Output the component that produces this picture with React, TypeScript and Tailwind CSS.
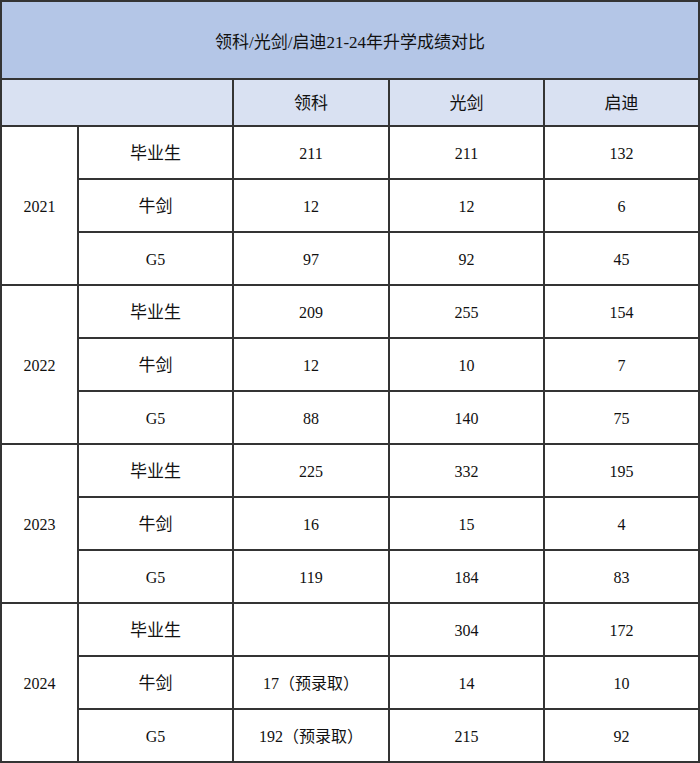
const groups = [
  {
    year: "2021",
    rows: [
      ["毕业生", "211", "211", "132"],
      ["牛剑", "12", "12", "6"],
      ["G5", "97", "92", "45"],
    ],
  },
  {
    year: "2022",
    rows: [
      ["毕业生", "209", "255", "154"],
      ["牛剑", "12", "10", "7"],
      ["G5", "88", "140", "75"],
    ],
  },
  {
    year: "2023",
    rows: [
      ["毕业生", "225", "332", "195"],
      ["牛剑", "16", "15", "4"],
      ["G5", "119", "184", "83"],
    ],
  },
  {
    year: "2024",
    rows: [
      ["毕业生", "", "304", "172"],
      ["牛剑", "17（预录取）", "14", "10"],
      ["G5", "192（预录取）", "215", "92"],
    ],
  },
];

// borders are the dark grid gap showing through
const cell = "flex items-center justify-center bg-white pt-[2px]";

export default function App() {
  return (
    <div
      className="w-[700px] h-[763px] overflow-hidden bg-[#343434] p-[2px] grid grid-cols-[75px_153px_154px_153px_153px] grid-rows-[76px_45px_repeat(12,51px)] gap-[2px] text-[16px] text-[#111]"
      style={{ fontFamily: '"Liberation Serif", "Noto Sans CJK SC", serif' }}
    >
      <div className={`${cell} col-span-5 !bg-[#b4c6e7] text-[17px] !pt-[5px]`}>
        领科/光剑/启迪21-24年升学成绩对比
      </div>
      <div className={`${cell} col-span-2 !bg-[#d9e1f2]`}></div>
      <div className={`${cell} !bg-[#d9e1f2] text-[17px]`}>领科</div>
      <div className={`${cell} !bg-[#d9e1f2] text-[17px]`}>光剑</div>
      <div className={`${cell} !bg-[#d9e1f2] text-[17px]`}>启迪</div>
      {groups.map((g) => [
        <div key={g.year} className={`${cell} row-span-3`}>
          {g.year}
        </div>,
        ...g.rows.map((r, i) => [
          <div key={g.year + i + "c"} className={`${cell} ${r[0] === "G5" ? "" : "text-[17px]"}`}>
            {r[0]}
          </div>,
          <div key={g.year + i + "a"} className={cell}>{r[1]}</div>,
          <div key={g.year + i + "b"} className={cell}>{r[2]}</div>,
          <div key={g.year + i + "d"} className={cell}>{r[3]}</div>,
        ]),
      ])}
    </div>
  );
}
